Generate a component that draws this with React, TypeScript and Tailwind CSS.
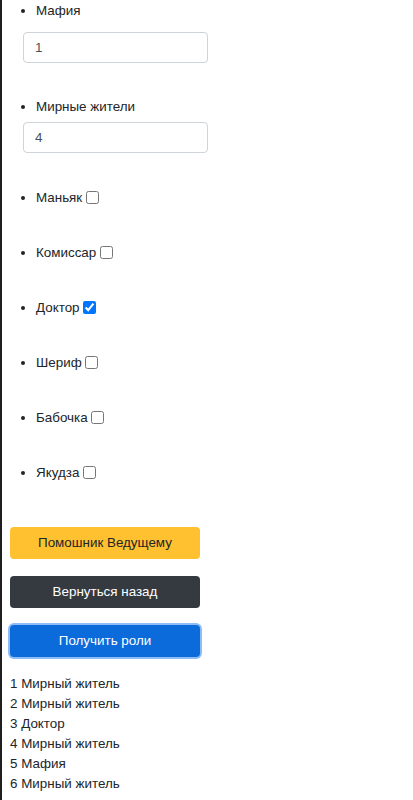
import { useState } from "react";

const roles = ["Маньяк", "Комиссар", "Доктор", "Шериф", "Бабочка", "Якудза"];

const result = [
  "1 Мирный житель",
  "2 Мирный житель",
  "3 Доктор",
  "4 Мирный житель",
  "5 Мафия",
  "6 Мирный житель",
];

export default function App() {
  const [mafia, setMafia] = useState("1");
  const [civilians, setCivilians] = useState("4");
  const [checked, setChecked] = useState<Record<string, boolean>>({ Доктор: true });

  return (
    <div
      className="min-h-screen border-l-2 border-[#1f1f1f] bg-white pl-2 pt-px text-[13.4px] leading-[20px] text-[#212529]"
      style={{ fontFamily: '"Liberation Sans", Arial, sans-serif' }}
    >
      <ul className="list-disc pl-[26px]">
        {/* числовые роли */}
        <li>
          <div>Мафия</div>
          <input
            type="text"
            value={mafia}
            onChange={(e) => setMafia(e.target.value)}
            className="-ml-[13px] mt-[11px] block h-[31px] w-[185px] rounded-[4px] border border-[#ced4da] px-[11px] text-[13.4px] text-[#495057] outline-none"
          />
        </li>
        <li className="mt-[34px]">
          <div>Мирные жители</div>
          <input
            type="text"
            value={civilians}
            onChange={(e) => setCivilians(e.target.value)}
            className="-ml-[13px] mt-[5px] block h-[31px] w-[185px] rounded-[4px] border border-[#ced4da] px-[11px] text-[13.4px] text-[#495057] outline-none"
          />
        </li>

        {/* роли с чекбоксами */}
        {roles.map((role, i) => (
          <li key={role} className={i === 0 ? "mt-[35px]" : "mt-[35px]"}>
            {role}{" "}
            <input
              type="checkbox"
              checked={!!checked[role]}
              onChange={(e) => setChecked({ ...checked, [role]: e.target.checked })}
              className="align-[-2px]"
            />
          </li>
        ))}
      </ul>

      <div className="mt-[44px] flex flex-col gap-[17px]">
        <button className="h-[32px] w-[190px] rounded-[4px] bg-[#ffc12f] text-[13.4px] text-[#212529]">
          Помошник Ведущему
        </button>
        <button className="h-[32px] w-[190px] rounded-[4px] bg-[#343a40] text-[13.4px] text-white">
          Вернуться назад
        </button>
        <button className="h-[32px] w-[190px] rounded-[4px] bg-[#0b6bda] text-[13.4px] text-white shadow-[0_0_0_2px_#8dbcf7]">
          Получить роли
        </button>
      </div>

      <div className="mt-[17px]">
        {result.map((r) => (
          <div key={r}>{r}</div>
        ))}
      </div>
    </div>
  );
}
